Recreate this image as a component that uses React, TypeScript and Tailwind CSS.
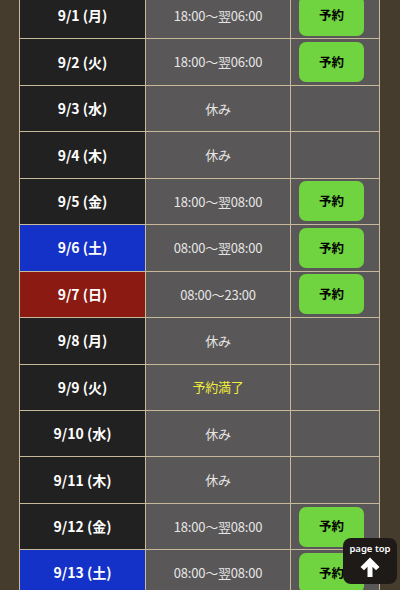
const rows = [
  { date: '9/1 (月)', time: '18:00～翌06:00', book: true },
  { date: '9/2 (火)', time: '18:00～翌06:00', book: true },
  { date: '9/3 (水)', time: '休み', book: false },
  { date: '9/4 (木)', time: '休み', book: false },
  { date: '9/5 (金)', time: '18:00～翌08:00', book: true },
  { date: '9/6 (土)', time: '08:00～翌08:00', book: true, day: 'sat' },
  { date: '9/7 (日)', time: '08:00～23:00', book: true, day: 'sun' },
  { date: '9/8 (月)', time: '休み', book: false },
  { date: '9/9 (火)', time: '予約満了', book: false, full: true },
  { date: '9/10 (水)', time: '休み', book: false },
  { date: '9/11 (木)', time: '休み', book: false },
  { date: '9/12 (金)', time: '18:00～翌08:00', book: true },
  { date: '9/13 (土)', time: '08:00～翌08:00', book: true, day: 'sat' },
];

function dateBg(day?: string) {
  if (day === 'sat') return 'bg-[#1432c8]';
  if (day === 'sun') return 'bg-[#8a1a12]';
  return 'bg-[#222121]';
}

export default function App() {
  return (
    <div
      className="relative w-[400px] h-[590px] overflow-hidden bg-[#463c2d]"
      style={{ fontFamily: '"Noto Sans CJK JP", "Noto Sans", sans-serif' }}
    >
      <div className="ml-[19px] w-[361px] -mt-[7px] border-l border-r border-[#c9b99b]">
        {rows.map((r) => (
          <div key={r.date} className="flex h-[46.45px] border-b border-[#c9b99b]">
            <div
              className={`w-[125px] flex items-center justify-center text-white font-bold text-[14px] ${dateBg(r.day)}`}
            >
              {r.date}
            </div>
            <div
              className={`w-[146px] flex items-center justify-center border-l border-r border-[#c9b99b] bg-[#595757] text-[13px] tracking-[-0.2px] ${
                r.full ? 'text-[#f0ee3c]' : 'text-[#e6e6e6]'
              }`}
            >
              {r.time}
            </div>
            <div className="flex-1 flex items-center pl-[8px] bg-[#595757]">
              {r.book && (
                <button className="w-[65px] h-[40px] rounded-[7px] bg-[#6fd43f] text-black font-bold text-[12.5px]">
                  予約
                </button>
              )}
            </div>
          </div>
        ))}
      </div>
      <div className="absolute left-[343px] top-[538px] w-[54px] h-[46px] rounded-[8px] bg-[#1e1a18] flex flex-col items-center pt-[5px]">
        <span className="text-white text-[9.5px] leading-[11px] font-semibold" style={{ fontFamily: '"Noto Sans", sans-serif' }}>
          page top
        </span>
        <svg width="24" height="24" viewBox="0 0 24 24" className="mt-[1px]">
          <path d="M12 2.5 L2.5 12 L6 15.2 L9.5 11.7 V22 H14.5 V11.7 L18 15.2 L21.5 12 Z" fill="white" />
        </svg>
      </div>
    </div>
  );
}
